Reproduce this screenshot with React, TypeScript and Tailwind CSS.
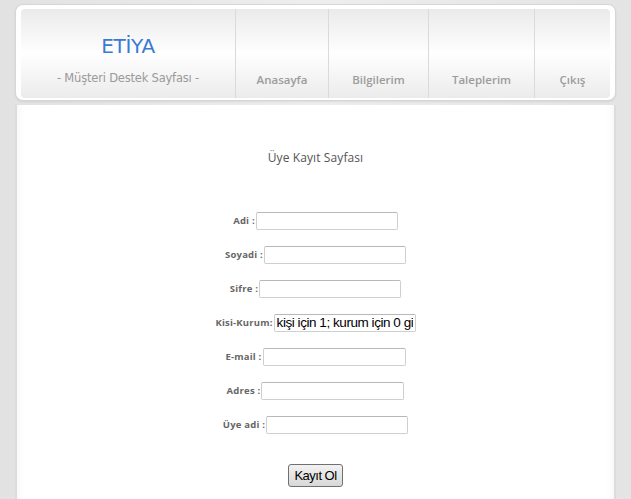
import React from "react";

const fields = [
  { label: "Adi :", w: "w-[142px]" },
  { label: "Soyadi :", w: "w-[142px]" },
  { label: "Sifre :", w: "w-[142px]" },
  { label: "Kisi-Kurum:", w: "w-[142px]", value: "kişi için 1; kurum için 0 giriniz" },
  { label: "E-mail :", w: "w-[143px]" },
  { label: "Adres :", w: "w-[143px]" },
  { label: "Üye adi :", w: "w-[142px]" },
];

const navItems = [
  { label: "Anasayfa", w: "w-[93px]" },
  { label: "Bilgilerim", w: "w-[100px]" },
  { label: "Taleplerim", w: "w-[106px]" },
  { label: "Çıkış", w: "flex-1" },
];

const App = () => {
  return (
    <div className="w-[631px] h-[499px] overflow-hidden bg-gradient-to-r from-[#e2e2e2] via-[#eeeeee] to-[#e4e4e4] px-[15px] pt-[4px] flex flex-col font-['Open_Sans',sans-serif]">
      {/* header */}
      <div className="h-[97px] rounded-[8px] border border-[#d6d6d6] bg-white px-[5px] pt-[4px] pb-[2px] shadow-[0_1px_2px_rgba(0,0,0,0.08)]">
        <div className="h-full flex rounded-[4px] bg-gradient-to-b from-[#eaeaea] via-white to-[#ebebeb]">
          <div className="w-[215px] border-r border-[#dadada] flex flex-col items-center pt-[24px]">
            <div className="text-[20px] leading-[26px] text-[#3b7ad2] font-['DejaVu_Sans',sans-serif] tracking-[-0.3px]">ETİYA</div>
            <div className="mt-[11px] text-[11.5px] text-[#9a9a9a] font-['DejaVu_Sans',sans-serif] tracking-[-0.2px]">- Müşteri Destek Sayfası -</div>
          </div>
          {navItems.map((n, i) => (
            <div
              key={n.label}
              className={`${n.w} ${i < navItems.length - 1 ? "border-r border-[#dadada]" : ""} flex items-end justify-center pb-[10px]`}
            >
              <span className="text-[11.5px] font-semibold text-[#9c9c9c]">{n.label}</span>
            </div>
          ))}
        </div>
      </div>

      {/* content */}
      <div className="mt-[4px] flex-1 bg-white border-x-[2px] border-[#dcdcdc] shadow-[inset_10px_0_8px_-8px_rgba(0,0,0,0.04),inset_-10px_0_8px_-8px_rgba(0,0,0,0.04)] flex flex-col items-center">
        <div className="mt-[44px] text-[12px] text-[#555] tracking-[0.1px]">Üye Kayıt Sayfası</div>
        <div className="mt-[45px] flex flex-col items-center gap-[16px]">
          {fields.map((f) => (
            <div key={f.label} className="h-[18px] flex items-center">
              <span className="text-[9.5px] font-bold text-[#666] mr-[1px] tracking-[0.2px]">{f.label}</span>
              <input
                readOnly
                defaultValue={f.value}
                className={`${f.w} h-[18px] border border-[#cfcfcf] border-t-[#b8b8b8] rounded-[2px] bg-white px-[2px] text-[13.5px] tracking-[-0.45px] text-black font-['Liberation_Sans',sans-serif] outline-none`}
              />
            </div>
          ))}
        </div>
        <button className="mt-[30px] h-[23px] px-[5px] rounded-[3px] border border-[#707070] bg-gradient-to-b from-[#f2f2f2] to-[#d8d8d8] text-[13px] text-black font-['Liberation_Sans',sans-serif] tracking-[-0.5px]">
          Kayıt Ol
        </button>
      </div>
    </div>
  );
};

export default App;
